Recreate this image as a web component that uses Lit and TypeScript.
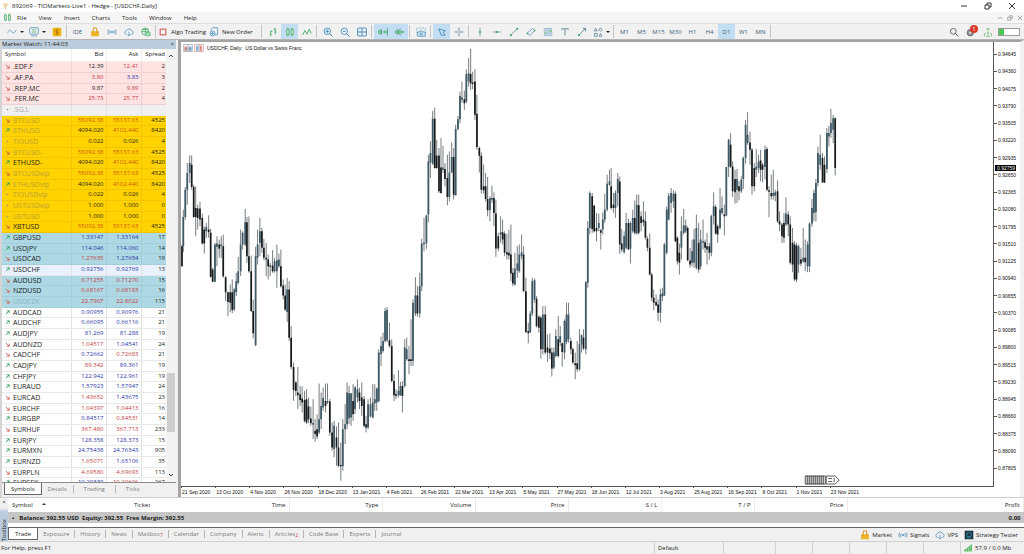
import { LitElement, html, css, svg } from "lit";
import { customElement } from "lit/decorators.js";
import { classMap } from "lit/directives/class-map.js";

type Quote = [string, string, string, string, string, string, string, string];

/* symbol, trend, bid, ask, spread, bid colour, ask colour, row kind */
const QUOTES: Quote[] = (
  `.EDF.F|d|12.39|12.41|2|k|r|pink
.AF.PA|d|3.80|3.83|3|r|b|pink
.REP.MC|d|9.87|9.89|2|k|r|pink
.FER.MC|d|25.73|25.77|4|r|r|pink
.SG.L|n||||k|k|grey off
BTCUSD|d|55092.38|55137.63|4525|o|o|gold off
ETHUSD|u|4094.020|4102.440|8420|k|o|gold off
TIOUSD|n|0.022|0.026|4|k|k|gold off
BTCUSD-|d|55092.38|55137.63|4525|o|o|gold off
ETHUSD-|u|4094.020|4102.440|8420|k|o|gold
BTCUSDvip|d|55092.38|55137.63|4525|o|o|gold off
ETHUSDvip|u|4094.020|4102.440|8420|k|o|gold off
TIOUSDvip|n|0.022|0.026|4|k|k|gold off
USTUSDvip|n|1.000|1.000|0|k|k|gold off
USTUSD|n|1.000|1.000|0|k|k|gold off
XBTUSD|d|55092.38|55137.63|4525|o|o|gold
GBPUSD|u|1.33147|1.33164|17|b|b|blue
USDJPY|u|114.046|114.060|14|b|b|blue
USDCAD|d|1.27635|1.27654|19|r|b|blue
USDCHF|u|0.92756|0.92769|13|b|b|sel
AUDUSD|d|0.71255|0.71270|15|r|r|blue
NZDUSD|d|0.68167|0.68183|16|r|r|blue
USDCZK|d|22.7907|22.8022|115|r|r|blue off
AUDCAD|u|0.90955|0.90976|21|b|b|
AUDCHF|u|0.66095|0.66116|21|b|b|
AUDJPY|u|81.269|81.288|19|b|b|
AUDNZD|d|1.04517|1.04541|24|r|b|
CADCHF|d|0.72662|0.72683|21|b|r|
CADJPY|u|89.342|89.361|19|r|b|
CHFJPY|u|122.942|122.961|19|b|b|
EURAUD|u|1.57923|1.57947|24|b|b|
EURCAD|d|1.43652|1.43675|23|r|b|
EURCHF|d|1.04397|1.04413|16|r|r|
EURGBP|u|0.84517|0.84531|14|b|r|
EURHUF|d|367.480|367.713|233|r|r|
EURJPY|u|128.358|128.373|15|b|b|
EURMXN|u|24.75438|24.76343|905|b|b|
EURNZD|u|1.65071|1.65106|35|r|b|
EURPLN|d|4.69580|4.69693|113|r|r|
EURSEK|u|10.20339|10.20606|267|b|r|`
).split("\n").map((l) => l.split("|") as unknown as Quote);

/* Price bars, drawn in runs. Each run has an origin; every bar is
   x, high, body top, body bottom, low in thirds of a chart unit. */
const RUNS: { x: number; y: number; bars: string }[] = [
  { x: -1, y: 88, bars: `6 345 350 410 412;10 240 262 350 368;16 172 180 262 270;22 100 130 180 225;29 77 100 130 160;35 77 105 172 180;41 165 172 262 265;47 170 235 262 320;53 225 237 265 300;60 217 237 270 290;67 252 265 342 345;73 290 300 342 372;79 280 292 305 325;86 257 300 308 325;92 298 310 442 445;98 415 420 457 458;105 340 345 457 458;111 320 342 352 410;118 330 345 358 385;124 320 345 350 385;130 315 350 440 445;137 440 443 488 515;144 487 488 518 560;151 465 488 520 548;157 450 488 542 552;163 475 480 540 545;169 430 455 488 500;175 382 425 460 465;182 300 345 425 440;188 305 310 345 360;196 238 278 345 350;201 262 278 380 400;207 260 380 425 430;214 378 425 545 548;220 510 545 612 627;227 352 380 648 650;233 300 345 385 405;240 265 305 340 380;246 295 305 355 370;252 328 355 385 392;259 340 385 390 440;265 375 390 410 450;271 400 408 412 440;278 362 408 425 430;284 385 395 425 430;291 345 392 425 475;297 372 390 410 415;303 360 410 470 475;310 450 468 498 510;316 465 498 540 545;322 445 480 548 578;328 455 480 625 635;334 590 625 713 720;341 700 713 782 815;348 755 760 785 800;354 713 790 798 840;361 770 795 812 830;367 772 808 820 850;374 785 812 875 880;380 780 810 880 885;386 805 832 870 882;393 832 868 882 890;400 810 882 886 930;406 870 905 915 938;412 855 900 922 930;418 763 870 910 915;424 790 830 870 900;430 775 806 835 845;437 763 815 830 850;443 763 815 820 825;450 810 817 910 920;457 880 910 955 965;463 875 890 960 985;470 892 925 955 1010;476 880 955 1010 1015;483 940 1008 1012 1055;489 870 900 1012 1025;496 825 885 900 945;502 760 790 885 900;508 770 792 867 885` },
  { x: 159, y: -2, bars: `34 1062 1062 1135 1160;40 1035 1085 1125 1145;46 1040 1045 1110 1125;53 1020 1050 1075 1090;59 1045 1060 1085 1110;66 1030 1075 1100 1130;73 1070 1080 1160 1165;79 1130 1155 1165 1180;85 1080 1095 1165 1170;92 1075 1095 1132 1135;99 1035 1090 1135 1138;105 1035 1080 1092 1115;111 1045 1048 1090 1115;117 930 940 1085 1090;124 892 920 945 980;130 880 905 935 940;136 805 815 905 910;142 803 812 903 908;149 850 903 920 925;156 900 920 1025 1030;163 1005 1025 1068 1085;169 1050 1065 1070 1080;176 993 1055 1068 1075;182 1028 1040 1068 1070;188 1025 1040 1070 1120;195 900 925 1040 1045;201 895 930 960 965;208 920 960 965 1005;214 840 960 965 980;220 780 790 965 980;227 713 768 822 830;233 740 768 822 832;240 700 740 822 835;246 598 612 740 755;253 535 610 614 635;260 525 528 612 628;266 345 365 525 548;272 305 340 368 415;279 213 237 372 375;285 203 237 385 387;291 300 347 385 387;298 325 347 455 460;304 295 383 460 462;310 318 383 390 400;316 370 388 418 440;323 345 415 472 497;329 335 398 472 485;336 308 352 398 400;342 325 352 465 480;348 255 268 467 468;355 228 238 268 272;361 155 168 238 250;367 125 172 180 188;374 152 178 190 210;380 88 102 185 190;387 55 100 125 140;393 27 102 130 150;399 95 128 132 148;406 88 125 225 240;412 165 222 322 330;419 320 325 348 398;425 338 348 450 462;432 375 440 452 462;438 400 440 478 485;444 412 478 512 530;451 470 475 512 545;457 438 475 480 490;463 458 475 520 560;469 480 522 627 652;476 580 590 627 635;483 530 578 586 610;489 540 578 600 615;495 575 583 640 650;502 582 638 645 660;508 570 640 648 660` },
  { x: 319, y: 18, bars: `34 495 585 642 665;40 625 640 672 680;46 580 628 675 678;53 560 612 632 655;59 555 585 635 640;66 525 578 590 600;72 560 585 695 697;79 655 695 818 822;86 790 815 822 852;92 755 762 818 822;98 655 665 762 770;105 657 662 720 730;111 710 718 800 805;118 768 772 805 820;124 770 775 870 898;130 740 765 870 885;137 740 765 880 885;144 825 865 880 908;151 822 868 882 900;157 865 880 928 952;163 865 880 925 930;169 810 830 890 895;176 770 840 890 895;182 800 830 850 860;188 850 852 878 922;195 780 785 880 900;201 730 765 848 855;207 730 765 840 850;214 835 845 870 885;220 865 870 910 915;227 880 912 918 960;233 845 912 930 938;240 810 855 930 935;246 825 828 855 880;252 810 835 868 872;259 665 668 870 885;265 485 505 670 685;271 395 400 505 525;278 400 410 508 520;284 435 438 515 518;291 460 505 515 545;298 462 490 505 515;304 508 512 520 570;310 458 480 510 525;316 403 450 480 490;323 345 372 450 455;330 330 365 375 378;335 325 380 445 450;342 400 435 445 460;348 392 400 445 475;355 340 358 400 440;361 350 365 555 583;367 508 552 570 578;374 515 530 578 583;380 460 490 565 570;387 478 490 570 570;393 485 490 568 612;400 450 475 515 520;406 422 475 520 525;412 405 435 522 525;418 405 437 520 525;425 455 470 490 515;432 425 480 488 500;438 455 485 535 540;444 530 538 565 575;451 522 565 645 648;457 640 645 715 725;463 690 715 730 752;470 705 728 738 740;476 720 735 760 785;483 688 705 760 790;489 685 702 710 725;495 550 555 708 710;502 440 450 580 585;508 400 408 480 482;515 385 400 430 460;522 392 402 425 445;528 395 402 545 548;534 530 535 605 615` },
  { x: 489, y: 48, bars: `30 462 490 520 555;36 380 425 475 510;43 358 408 430 435;49 390 408 425 430;55 410 415 512 515;62 475 513 525 535;68 450 485 520 530;74 418 450 520 535;81 375 415 535 540;88 400 460 540 550;94 420 450 530 540;101 390 455 460 480;107 450 458 475 490;113 430 470 480 525;120 460 470 490 510;126 375 380 490 500;133 308 350 380 405;139 345 352 432 435;145 405 410 435 460;152 295 360 415 420;158 320 355 370 375;165 345 375 380 437;171 232 232 378 380;178 147 150 232 262;184 130 165 230 235;190 215 230 305 322;197 240 268 308 342;203 238 268 300 340;209 275 290 305 332;216 260 270 305 310;222 200 205 268 298;229 90 105 205 222;235 67 135 160 165;242 125 158 180 225;248 175 180 290 315;255 220 235 290 305;261 178 230 240 262;268 195 215 235 250;274 180 212 240 275;280 220 225 240 278;287 167 180 232 270;293 172 178 300 305;299 290 302 306 383;306 255 310 320 330;312 240 310 318 330;318 300 308 318 335;325 272 305 395 400;331 365 395 405 425;338 400 405 440 460;344 370 400 445 460;350 323 372 405 410;357 365 375 405 440;363 380 405 520 525;370 415 460 525 548;376 455 465 570 575;382 460 468 570 578;388 465 470 525 550;395 475 510 522 530;402 415 505 515 520;408 450 505 518 545;415 455 465 530 548;421 398 402 530 548;428 328 355 402 412;434 300 310 370 395;440 268 280 368 395;446 170 190 280 290;453 135 195 225 240;460 190 205 278 280;466 200 225 278 280;473 115 130 238 250;479 108 130 140 170;485 57 100 130 145;492 75 85 120 160;498 82 85 235 257` },
];

const BARS = (() => {
  const out: { x: number; hi: number; top: number; bot: number; lo: number; up: boolean }[] = [];
  let prev = 0;
  for (const run of RUNS)
    for (const b of run.bars.split(";")) {
      const [x, hi, top, bot, lo] = b.split(" ").map((n) => Number(n) / 3);
      const mid = run.y + (top + bot) / 2;
      out.push({ x: run.x + x, hi: run.y + hi, top: run.y + top, bot: run.y + bot, lo: run.y + lo, up: mid < prev });
      prev = mid;
    }
  return out;
})();

const PRICES = Array.from({ length: 25 }, (_, i) => (0.94645 - i * 0.00285).toFixed(5));
const DATES = "21 Sep 2020,13 Oct 2020,4 Nov 2020,26 Nov 2020,18 Dec 2020,13 Jan 2021,4 Feb 2021,26 Feb 2021,22 Mar 2021,13 Apr 2021,5 May 2021,27 May 2021,18 Jun 2021,12 Jul 2021,3 Aug 2021,25 Aug 2021,16 Sep 2021,8 Oct 2021,1 Nov 2021,23 Nov 2021".split(",");

const B = "#3f88b5";
const G = "#3ba55d";
const ICONS: Record<string, unknown> = {
  line: svg`<path d="M1 8c2-5 4-4 5.500-1.500S10 9 13 4" stroke="${B}"/>`,
  screen: svg`<rect x="1" y="1" width="12" height="9" rx="1" stroke="${B}"/><path d="M4 4h6M4 7h6" stroke="${G}"/><path d="M3 12.500h8" stroke="${B}"/>`,
  dollar: svg`<rect x="1" y="1" width="12" height="12" rx="1.500" fill="#efb310"/><path d="M9 4.500C7.500 3.300 5 3.700 5 5.500c0 2 4 1.200 4 3.200 0 1.600-2.500 2-4 .8M7 2.800v8.400" stroke="#a36b00"/>`,
  bag: svg`<path d="M1.500 6h11v7h-11z" fill="#f0b429"/><path d="M4.500 8V3.500a2.500 2.500 0 0 1 5 0V8" stroke="#d99a1c" stroke-width="1.500"/>`,
  signal: svg`<circle cx="7" cy="7" r="1.300" fill="${B}"/><path d="M4.500 4.500q-1.600 2.500 0 5M9.500 4.500q1.600 2.500 0 5M2.200 3.500q-2 3.500 0 7M11.800 3.500q2 3.500 0 7" stroke="${B}"/>`,
  cloud: svg`<path d="M4 10.500H3.500a2.700 2.700 0 0 1-.2-5.300 4 4 0 0 1 7.400 0 2.700 2.700 0 0 1-.2 5.300H10" stroke="${B}"/><path d="M7 6.500v6M5 10.500l2 2 2-2" stroke="${B}"/>`,
  vps: svg`<circle cx="6" cy="6.500" r="5" stroke="${G}"/><path d="M6 1.500v10M1 6.500h10M2 3.500h8" stroke="${G}"/><rect x="6.500" y="7" width="7" height="6" rx="1" fill="#7cc894"/><path d="M8 9.500l1.500 1.500 2.500-2.500" stroke="#fff"/>`,
  stop: svg`<rect x="3" y="3" width="8" height="8" stroke="#cf5147" stroke-width="1.400"/>`,
  order: svg`<path d="M3 5V3l2-2h7v10H8" stroke="${B}"/><circle cx="5" cy="9" r="3.500" fill="#d8ecf7" stroke="${B}"/><path d="M5 7v4M3 9h4" stroke="${B}"/>`,
  bars: svg`<path d="M4 5v8M2 10h2M4 6h2M10 1v9M8 3.500h2M10 7h2" stroke="${G}" stroke-width="1.200"/>`,
  candles: svg`<path d="M4 1v12M10 1v12" stroke="${G}"/><rect x="2.500" y="3" width="3" height="8" fill="#c5ecd0" stroke="${G}"/><rect x="8.500" y="3" width="3" height="8" fill="#c5ecd0" stroke="${G}"/>`,
  zigzag: svg`<path d="M1 11l3-6 3 5 3-7 3 6" stroke="${G}" stroke-width="1.200"/>`,
  plus: svg`<circle cx="6" cy="6" r="4.500" fill="#dceefa" stroke="${B}" stroke-width="1.200"/><path d="M9.500 9.500l4 4M6 4v4M4 6h4" stroke="${B}" stroke-width="1.400"/>`,
  minus: svg`<circle cx="6" cy="6" r="4.500" fill="#eef6fb" stroke="${B}" stroke-width="1.200"/><path d="M9.500 9.500l4 4M4 6h4" stroke="${B}" stroke-width="1.400"/>`,
  tile: svg`<rect x="1" y="1.500" width="12" height="11" rx="1" stroke="${B}" stroke-width="1.300"/><path d="M7 2v10M1 7h12" stroke="${B}" stroke-width="1.300"/>`,
  scroll: svg`<path d="M1 5v4M3 3v8M5 4v6M7 7h4M9.500 5l2 2-2 2M13 2v10" stroke="${G}" stroke-width="1.300"/>`,
  shift: svg`<path d="M1 5v4M3 3v8M5 4v6M7 2v10M13 7H9M10.500 5l-2 2 2 2" stroke="${G}" stroke-width="1.300"/>`,
  camera: svg`<path d="M1 8V1.500h12V8" stroke="${B}" stroke-dasharray="1.500 1.500"/><path d="M2 7h2.500l1-1.500h3L9.500 7H13v6H2z" stroke="${B}" fill="#cfe6f3"/><circle cx="7.200" cy="9.800" r="1.600" stroke="${B}"/>`,
  cursor: svg`<path d="M2.500 2.500l9 3-3 2 3 4H6z" stroke="${B}" stroke-width="1.200"/>`,
  cross: svg`<path d="M7 1v5M7 8v5M1 7h5M8 7h5" stroke="#5d7684" stroke-width="1.200"/>`,
  vline: svg`<path d="M7 1v12" stroke="#6b8f80"/><circle cx="7" cy="7" r="1.400" fill="${G}"/>`,
  hline: svg`<path d="M1 7h12" stroke="#6b8f80"/><circle cx="7" cy="7" r="1.400" fill="${G}"/>`,
  trend: svg`<path d="M2 12L12 2" stroke="#587f92"/><circle cx="2.500" cy="11.500" r="1.500" fill="${G}"/><circle cx="11.500" cy="2.500" r="1.500" fill="${G}"/>`,
  channel: svg`<path d="M1.500 9L9 2M5 12l7.500-7M2 9l3 3M9 2l3 3" stroke="${B}"/><circle cx="2" cy="9" r="1.200" fill="${G}"/><circle cx="12" cy="5" r="1.200" fill="${G}"/>`,
  fibo: svg`<path d="M1 2.500h12M1 5.500h9M4 8.500h9M1 11.500h12" stroke="${B}"/><circle cx="11" cy="5.500" r="1.200" fill="${G}"/><circle cx="3" cy="8.500" r="1.200" fill="${G}"/>`,
  text: svg`<path d="M2.500 4V2.500h9V4M7 2.500V12" stroke="#587f92" stroke-width="1.200"/>`,
  arrow: svg`<path d="M2 12L12 2M8 2h4v4" stroke="#587f92" stroke-width="1.200"/><circle cx="2.800" cy="11.200" r="1.500" fill="${G}"/>`,
  shapes: svg`<path d="M1.500 5.500L3.700 1.500l2.300 4zM2 9h4v4H2z" stroke="#587f92"/><circle cx="10.500" cy="3.700" r="2" stroke="#587f92"/><path d="M8.500 13l2-4 2 4z" stroke="#587f92"/>`,
  search: svg`<circle cx="6" cy="6" r="4" stroke="#555" stroke-width="1.200"/><path d="M9 9l4 4" stroke="#555" stroke-width="1.400"/>`,
  bell: svg`<circle cx="6" cy="8" r="4.500" fill="#8b8f94" stroke="#5b5f63"/><path d="M4 8h4M6 6v4" stroke="#f1f1f1"/>`,
  net: svg`<circle cx="7" cy="3" r="1.800" fill="#8fcf95"/><path d="M2 13V9h2M7 6v7M5.500 8h3M12 13V9h-2M4 13h6" stroke="#69b871"/>`,
  chip: svg`<rect x="1" y="1" width="12" height="12" fill="#16323f"/><path d="M4 4h6v5H4zM4 11h6" stroke="#4f9ab8"/>`,
  wave: svg`<path d="M2 13V9M5.500 13V6.500M9 13V4M12.500 13V1" stroke="#3fae4a" stroke-width="2.400"/>`,
  logo: svg`<path d="M2 1h10l1 4-6 8-6-8z" fill="#f6e0bd"/><path d="M7 4v9" stroke="#d8b57c"/>`,
  oneclick: svg`<path d="M1 2h12v10H1z" fill="#fff" stroke="#8a9eb0"/><path d="M2 5h4v6H2z" fill="#e3877f"/><path d="M8 5h4v6H8z" fill="#86acd0"/><path d="M7 2v10M2 8h10" stroke="#8a9eb0"/>`,
  depth: svg`<path d="M1 2h12v10H1z" fill="#fff" stroke="#c98f8a"/><path d="M3 4h3v7H3z" fill="#86acd0"/><path d="M8 4h3v7H8z" fill="#e3877f"/><path d="M7 2v10" stroke="#8a9eb0"/>`,
};
const icon = (n: string) => html`<svg class="icon" viewBox="0 0 14 14" fill="none" aria-hidden="true">${ICONS[n]}</svg>`;
const TREND: Record<string, unknown> = {
  u: html`<svg class="trend" viewBox="0 0 6 6" fill="none"><path d="M1 5l4-4M2 1h3v3" stroke="#2f9e5c"/></svg>`,
  d: html`<svg class="trend" viewBox="0 0 6 6" fill="none"><path d="M1 1l4 4M5 2v3H2" stroke="#cc5a4e"/></svg>`,
  n: html`<svg class="trend" viewBox="0 0 6 6"><circle cx="3" cy="3" r="1" fill="#9a9a7a"/></svg>`,
};

const base = css`
  :host { display: block; font-family: "Open Sans", "Noto Sans", sans-serif; font-size: 6px; line-height: 10px; color: #1c1c1c; }
  * { box-sizing: border-box; }
  button { font: inherit; color: inherit; border: 0; background: none; padding: 0; display: flex; align-items: center; justify-content: center; white-space: nowrap; }
  .icon { width: 10px; height: 10px; flex: none; display: block; }
  table { border-collapse: collapse; table-layout: fixed; width: 100%; }
  th, td { font-weight: 400; padding: 0; white-space: nowrap; overflow: hidden; }
`;

@customElement("tool-bar")
export class ToolBar extends LitElement {
  static styles = [base, css`
    .bar { display: flex; align-items: stretch; height: 16px; padding: 0 4px; background: #f1f1f1; border-top: 1px solid #dedede; }
    .btn { width: 17px; color: #3c6079; }
    .drop { width: 22px; gap: 3px; }
    .drop::after { content: ""; border: 2px solid transparent; border-top-color: #222; border-bottom: 0; }
    .label { width: 51px; gap: 3px; color: #1c1c1c; justify-content: flex-start; }
    .on { background: #c3def2; }
    .sep { width: 1px; margin: 1px 2px 1px 1px; background: #c4c4c4; }
    .push { flex: 1; }
    .alert { position: relative; }
    .badge { position: absolute; left: 8px; top: 1px; width: 8px; height: 8px; border-radius: 50%; background: #d93a2b; color: #fff; line-height: 8px; text-align: center; }
    .meter { align-self: center; width: 22px; height: 8px; margin-left: 2px; border: 1px solid #9c9c9c; background: #fff; }
    .level { height: 100%; background: #4cc552; }
  `];
  btn(n: string, cls = "") { return html`<button class="btn ${cls}" aria-label=${n}>${icon(n)}</button>`; }
  render() {
    const sep = html`<span class="sep"></span>`;
    return html`<div class="bar" role="toolbar">
      ${this.btn("line", "drop")}${this.btn("screen", "drop")}${this.btn("dollar")}${sep}
      <button class="btn">IDE</button>${["bag", "signal", "cloud", "vps"].map((n) => this.btn(n))}${sep}
      <button class="label">${icon("stop")}Algo Trading</button>
      <button class="label">${icon("order")}New Order</button>${sep}
      ${this.btn("bars")}${this.btn("candles", "on")}${this.btn("zigzag")}${sep}
      ${["plus", "minus", "tile"].map((n) => this.btn(n))}${sep}
      ${this.btn("scroll", "on")}${this.btn("shift", "on")}${sep}${this.btn("camera")}${sep}
      ${this.btn("cursor", "on")}${this.btn("cross")}${sep}
      ${["vline", "hline", "trend", "channel", "fibo", "text", "arrow"].map((n) => this.btn(n))}${this.btn("shapes", "drop")}${sep}
      ${["M1", "M5", "M15", "M30", "H1", "H4", "D1", "W1", "MN"].map((t) => html`<button class=${classMap({ btn: true, on: t === "D1" })}>${t}</button>`)}${sep}
      <span class="push"></span>
      ${this.btn("search")}
      <button class="btn alert" aria-label="Notifications">${icon("bell")}<span class="badge">1</span></button>
      ${this.btn("net")}
      <div class="meter"><div class="level" style="width:27%"></div></div>
    </div>`;
  }
}

@customElement("market-watch")
export class MarketWatch extends LitElement {
  static styles = [base, css`
    :host { display: flex; flex-direction: column; min-height: 0; background: #f0f0f0; border-left: 2px solid #d5d5d5; }
    .head { display: flex; justify-content: space-between; align-items: center; height: 9px; padding: 0 2px 0 0; background: #bccddd; line-height: 9px; }
    .body { flex: 1; display: flex; min-height: 0; border-bottom: 1px solid #8c8c8c; }
    .list { flex: 1; overflow: hidden; background: #fff; }
    .num { width: 35px; } .spr { width: 25px; }
    tr { height: 11px; }
    tbody tr:nth-child(3n) { height: 10px; }
    thead tr { height: 12px; }
    th, td { text-align: right; line-height: 9px; padding-right: 2px; border-right: 1px solid #e2e2e2; border-bottom: 1px solid #e8e8e8; }
    th:first-child, td:first-child { text-align: left; padding-left: 3px; }
    td:first-child { font-size: 7px; }
    th { border-color: #eee; }
    th:last-child, td:last-child { border-right: 0; padding-right: 1px; }
    .trend { width: 5px; height: 5px; margin-right: 3px; }
    .pink { background: #ffe3e3; } .grey { background: #f0f0f0; } .gold { background: #ffd200; }
    .blue { background: #add8e4; } .sel { background: #e8f1fd; }
    .pink td { border-color: #efcfcf; } .gold td { border-color: #f3c500; } .blue td { border-color: #a2cdd9; }
    .off td:first-child { color: #a5a5a5; } .gold.off td:first-child { color: #b8a13a; } .blue.off td:first-child { color: #8fb3bd; }
    .list .r { color: #c43c42; } .list .b { color: #2c36a8; } .list .o { color: #d2570c; }
    .scroll { width: 10px; display: flex; flex-direction: column; align-items: center; background: #f3f3f3; }
    .caret { width: 10px; height: 14px; }
    .chev { width: 6px; height: 4px; }
    .above { flex: 52; } .below { flex: 6; }
    .thumb { flex: 10; width: 8px; background: #cdcdcd; }
    .tabs { display: flex; align-items: flex-start; height: 14px; padding-left: 2px; }
    .tab { height: 12px; color: #808080; padding: 0 6px; }
    .tab + .tab + .tab { border-left: 1px solid #b9b9b9; height: 8px; margin-top: 2px; padding: 0 10px; }
    .active { background: #fff; color: #1c1c1c; border: 1px solid #666; border-top: 0; }
  `];
  render() {
    return html`
      <div class="head"><span>Market Watch: 11:44:03</span><button aria-label="Close">×</button></div>
      <div class="body">
        <div class="list"><table>
          <colgroup><col><col class="num"><col class="num"><col class="spr"></colgroup>
          <thead><tr><th>Symbol</th><th>Bid</th><th>Ask</th><th>Spread</th></tr></thead>
          <tbody>${QUOTES.map(([s, t, bid, ask, sp, bc, ac, kind]) => html`<tr class=${kind}>
            <td>${TREND[t]}${s}</td><td class=${bc}>${bid}</td><td class=${ac}>${ask}</td><td>${sp}</td></tr>`)}</tbody>
        </table></div>
        <div class="scroll">
          <button class="caret" aria-label="Scroll up"><svg class="chev" viewBox="0 0 6 4" fill="none"><path d="M1 3l2-2 2 2" stroke="#444"/></svg></button>
          <span class="above"></span><span class="thumb"></span><span class="below"></span>
          <button class="caret" aria-label="Scroll down"><svg class="chev" viewBox="0 0 6 4" fill="none"><path d="M1 1l2 2 2-2" stroke="#444"/></svg></button>
        </div>
      </div>
      <div class="tabs">${["Symbols", "Details", "Trading", "Ticks"].map((t, i) => html`<button class=${classMap({ tab: true, active: i === 0 })}>${t}</button>`)}</div>`;
  }
}

@customElement("price-chart")
export class PriceChart extends LitElement {
  static styles = [base, css`
    :host { display: grid; grid-template-columns: 1fr 26px; grid-template-rows: 1fr 10px; min-height: 0; min-width: 0; background: #fff;
      font-family: "Liberation Sans", sans-serif; font-size: 5px; line-height: 6px; color: #111;
      border-top: 2px solid #a3a3a3; border-left: 3px solid #a3a3a3; border-right: 4px solid #f2f2f2; }
    .plot { position: relative; border-right: 1px solid #555; border-bottom: 1px solid #555; min-height: 0; }
    .canvas { position: absolute; inset: 0; width: 100%; height: 100%; }
    .name { position: absolute; left: 2px; top: 1px; display: flex; align-items: center; gap: 1px; white-space: pre; }
    .title { padding-left: 2px; }
    .prices { position: relative; display: flex; flex-direction: column; justify-content: space-between; padding: 9px 0 16px; }
    .price { display: flex; align-items: center; gap: 1px; }
    .price::before { content: ""; width: 3px; height: 1px; background: #555; }
    .last { position: absolute; left: 1px; padding: 0 1px 0 2px; background: #000; color: #fff; }
    .dates { display: grid; grid-template-columns: repeat(20, 1fr); width: 84%; line-height: 8px; white-space: nowrap; }
    .date { border-left: 1px solid transparent; border-image: linear-gradient(#555 2px, transparent 2px) 1; padding-top: 1px; }
  `];
  render() {
    const at = (p: number) => 2 + ((0.94645 - p) / 0.0684) * 93.3;
    return html`
      <div class="plot">
        <svg class="canvas" viewBox="0 0 813 445" preserveAspectRatio="none" role="img" aria-label="USDCHF daily candles">
          <path d=${BARS.map((b) => `M${b.x.toFixed(1)} ${b.hi.toFixed(1)}V${b.lo.toFixed(1)}`).join("")} stroke="#565c60" stroke-width="0.800" fill="none"/>
          <path d=${BARS.filter((b) => b.up).map((b) => `M${b.x.toFixed(1)} ${b.top.toFixed(1)}V${b.bot.toFixed(1)}`).join("")} stroke="#3f5a66" stroke-width="1.800" fill="none"/>
          <path d=${BARS.filter((b) => !b.up).map((b) => `M${b.x.toFixed(1)} ${b.top.toFixed(1)}V${Math.max(b.bot, b.top + 1).toFixed(1)}`).join("")} stroke="#15191b" stroke-width="1.700" fill="none"/>
          <g stroke="#333" stroke-width="0.800" fill="#fff">
            ${Array.from({ length: 10 }, (_, i) => svg`<rect x=${625 + i * 2} y="435" width="2" height="8"/>`)}
            <path d="M646 435h9l4 4-4 4h-9zM648 437.500h4M648 440.500h4M654 437v4"/>
          </g>
        </svg>
        <div class="name">${icon("oneclick")}${icon("depth")}<span class="title">USDCHF, Daily:  US Dollar vs Swiss Franc</span></div>
      </div>
      <div class="prices">${PRICES.map((p) => html`<span class="price">${p}</span>`)}
        <span class="last" style="top:${at(0.92759).toFixed(1)}%">0.92759</span></div>
      <div class="dates">${DATES.map((d) => html`<span class="date">${d}</span>`)}</div>`;
  }
}

@customElement("trade-toolbox")
export class TradeToolbox extends LitElement {
  static styles = [base, css`
    :host { display: grid; grid-template-columns: 8px 1fr; background: #f0f0f0; border-top: 1px solid #cfcfcf; }
    .side { display: flex; flex-direction: column; align-items: center; justify-content: space-between; background: linear-gradient(#f0f0f0 10px, #b9cbdd 14px); }
    .side button { height: 8px; }
    .side span { writing-mode: vertical-rl; transform: rotate(180deg); line-height: 8px; }
    .pane { background: #fff; min-width: 0; }
    .c1 { width: 122px; } .c2 { width: 83px; } .c3 { width: 76px; } .cn { width: 93px; }
    th { height: 14px; text-align: right; padding-right: 3px; border-right: 1px solid #ececec; }
    th:first-child, th:nth-child(2) { text-align: left; padding-left: 4px; border-right: 0; }
    .sort { display: inline-block; margin: 0 0 2px 9px; border: 2px solid transparent; border-bottom-color: #333; border-top: 0; }
    .sum td { background: #c6c6c6; height: 11px; font-weight: 700; padding: 0 3px; }
    .sum td:last-child { text-align: right; }
    .bullet { padding: 0 5px 0 1px; }
    .gap { height: 5px; border-bottom: 1px solid #666; }
    .foot { display: flex; justify-content: space-between; height: 13px; background: #f0f0f0; padding-right: 6px; }
    .tabs { display: flex; }
    .tab { color: #7b7b7b; margin: 2px 0 3px; padding: 0 5px; border-left: 1px solid #b5b5b5; }
    .tab:nth-child(2) { border-left: 0; }
    .active { background: #fff; color: #1c1c1c; margin: 0 0 1px; padding: 0 6px; border: 1px solid #666; border-top: 0; }
    .tab sub { font-size: 5px; line-height: 5px; color: #c44; align-self: flex-end; }
    .links { display: flex; gap: 6px; align-items: center; }
    .links a { display: flex; align-items: center; gap: 2px; color: #1c1c1c; text-decoration: none; }
  `];
  render() {
    const tabs = ["Trade", "Exposure", "History", "News", "Mailbox:7", "Calendar", "Company", "Alerts", "Articles:2", "Code Base", "Experts", "Journal"];
    const cols = ["Time", "Type", "Volume", "Price", "S / L", "T / P", "Price", "Profit"];
    return html`
      <div class="side"><button aria-label="Close">×</button><span>Toolbox</span></div>
      <div class="pane">
        <table>
          <colgroup><col class="c1"><col class="c2"><col class="c3">${[1, 2, 3, 4, 5, 6].map(() => html`<col class="cn">`)}<col></colgroup>
          <thead><tr><th>Symbol<span class="sort"></span></th><th>Ticket</th>${cols.map((c) => html`<th>${c}</th>`)}</tr></thead>
          <tbody><tr class="sum"><td colspan="9"><span class="bullet">•</span>Balance: 392.55 USD&nbsp; Equity: 392.55&nbsp; Free Margin: 392.55</td><td>0.00</td></tr></tbody>
        </table>
        <div class="gap"></div>
        <div class="foot">
          <div class="tabs">${tabs.map((t, i) => {
            const [n, c] = t.split(":");
            return html`<button class=${classMap({ tab: true, active: i === 0 })}>${n}${c ? html`<sub>${c}</sub>` : ""}</button>`;
          })}</div>
          <div class="links">${[["bag", "Market"], ["signal", "Signals"], ["cloud", "VPS"], ["chip", "Strategy Tester"]].map(([i, n]) => html`<a href="#">${icon(i)}${n}</a>`)}</div>
        </div>
      </div>`;
  }
}

@customElement("app-root")
export class AppRoot extends LitElement {
  static styles = [base, css`
    :host { display: flex; flex-direction: column; height: 100vh; background: #f0f0f0; overflow: hidden; }
    .titlebar { display: flex; align-items: center; gap: 3px; height: 12px; padding: 0 8px 0 2px; background: #fff; }
    .titlebar h1 { flex: 1; margin: 0; font-size: 6px; font-weight: 400; }
    .titlebar .icon { width: 7px; height: 8px; }
    .win { display: flex; gap: 16px; }
    .win svg { width: 8px; height: 8px; }
    .menu { display: flex; align-items: center; height: 11px; gap: 12px; padding: 0 1px 0 3px; background: #f6f6f6; }
    .menu .icon { width: 9px; height: 9px; margin-right: -7px; }
    .mdi { display: flex; gap: 4px; margin-left: auto; }
    .mdi svg { width: 6px; height: 6px; opacity: 0.5; }
    .main { flex: 1; display: grid; grid-template-columns: 178px 1fr; min-height: 0; border-top: 1px solid #b4b4b4; }
    .watch { margin-right: 2px; }
    .status { display: flex; align-items: stretch; height: 13px; border-top: 1px solid #d0d0d0; line-height: 12px; }
    .status span { border-left: 1px solid #d0d0d0; padding-left: 3px; }
    .status .help { flex: 1; border: 0; padding-left: 1px; }
    .w1 { width: 69px; } .w2 { width: 52px; } .w3 { width: 37px; }
    .status .rate { display: flex; align-items: center; gap: 3px; width: 64px; }
    .rate .icon { width: 8px; height: 8px; }
  `];
  winButtons() {
    const shapes = [
      ["Minimize", svg`<path d="M1 4h6" stroke="#333"/>`],
      ["Restore", svg`<path d="M1 3h4v4H1zM3 3V1h4v4H5" stroke="#333"/>`],
      ["Close", svg`<path d="M1 1l6 6M7 1l-6 6" stroke="#333"/>`],
    ];
    return shapes.map(([n, s]) => html`<button aria-label=${n}><svg viewBox="0 0 8 8" fill="none">${s}</svg></button>`);
  }
  render() {
    return html`
      <header class="titlebar">${icon("logo")}<h1>892069 - TIOMarkets-Live1 - Hedge - [USDCHF,Daily]</h1><div class="win">${this.winButtons()}</div></header>
      <nav class="menu">${icon("candles")}${["File", "View", "Insert", "Charts", "Tools", "Window", "Help"].map((m) => html`<button>${m}</button>`)}<div class="mdi">${this.winButtons()}</div></nav>
      <tool-bar></tool-bar>
      <main class="main"><market-watch class="watch"></market-watch><price-chart></price-chart></main>
      <trade-toolbox></trade-toolbox>
      <footer class="status"><span class="help">For Help, press F1</span><span class="w1">Default</span><span class="w2"></span>
        <span class="w3"></span><span class="w3"></span><span class="w3"></span><span class="w3"></span><span class="w3"></span>
        <span class="rate">${icon("wave")}57.9 / 0.0 Mb</span></footer>`;
  }
}
